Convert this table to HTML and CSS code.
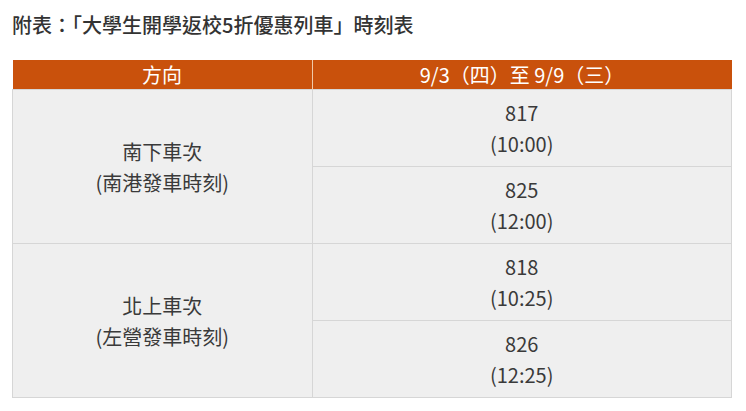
FILE: index.html
```html
<!DOCTYPE html>
<html lang="zh-Hant">
<head>
<meta charset="utf-8">
<link rel="stylesheet" href="styles.css">
</head>
<body>
<div class="page">
  <h3 class="title">附表：「大學生開學返校5折優惠列車」時刻表</h3>
  <table class="timetable">
    <thead>
      <tr>
        <th class="col-dir">方向</th>
        <th class="col-time">9/3（四）至 9/9（三）</th>
      </tr>
    </thead>
    <tbody>
      <tr>
        <td class="dir" rowspan="2">南下車次<br>(南港發車時刻)</td>
        <td>817<br>(10:00)</td>
      </tr>
      <tr>
        <td>825<br>(12:00)</td>
      </tr>
      <tr>
        <td class="dir" rowspan="2">北上車次<br>(左營發車時刻)</td>
        <td>818<br>(10:25)</td>
      </tr>
      <tr>
        <td>826<br>(12:25)</td>
      </tr>
    </tbody>
  </table>
</div>
</body>
</html>
```
FILE: styles.css
```css
html, body {
  margin: 0;
  padding: 0;
  background: #ffffff;
}
body {
  font-family: "Noto Sans CJK TC", "Noto Sans", sans-serif;
  color: #333333;
}
.page {
  padding: 12px 14px 0 12px;
}
.title {
  margin: 0 0 22px 0;
  font-size: 20px;
  line-height: 26px;
  font-weight: 500;
  color: #333333;
}
.timetable {
  width: 720px;
  border-collapse: collapse;
  table-layout: fixed;
  font-size: 20px;
}
.timetable th {
  background: #c9510c;
  color: #ffffff;
  font-weight: 400;
  height: 29px;
  padding: 0;
  line-height: 29px;
  border-left: 1px solid #f0c9a8;
}
.timetable th:first-child {
  border-left: none;
}
.col-dir {
  width: 299px;
}
.timetable td {
  background: #efefef;
  border: 1px solid #d6d6d6;
  text-align: center;
  padding: 7px 0 7px 0;
  line-height: 31px;
  color: #3a3a3a;
  height: 62px;
}
```
